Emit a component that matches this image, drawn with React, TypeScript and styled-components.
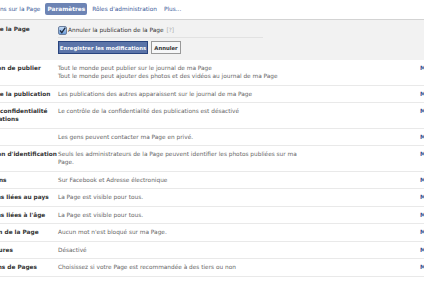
import React, { useState } from 'react';
import styled, { createGlobalStyle } from 'styled-components';

const GlobalStyle = createGlobalStyle`
  html, body {
    margin: 0;
    padding: 0;
    background: #fff;
    overflow: hidden;
  }
  body {
    font-family: "DejaVu Sans", "Lucida Grande", Tahoma, sans-serif;
    font-size: 5.8px;
    color: #333;
  }
`;

interface SettingRow {
  label: string[];
  value: string[];
}

// lines are given as they wrap in the narrow settings column
const rows: SettingRow[] = [
  {
    label: ['Autorisation de publier'],
    value: [
      'Tout le monde peut publier sur le journal de ma Page',
      'Tout le monde peut ajouter des photos et des vidéos au journal de ma Page',
    ],
  },
  { label: ['Visibilité de la publication'], value: ['Les publications des autres apparaissent sur le journal de ma Page'] },
  {
    label: ['Ciblage et confidentialité', 'des publications'],
    value: ['Le contrôle de la confidentialité des publications est désactivé'],
  },
  { label: ['Messages'], value: ['Les gens peuvent contacter ma Page en privé.'] },
  {
    label: ["Autorisation d'identification"],
    value: ['Seuls les administrateurs de la Page peuvent identifier les photos publiées sur ma', 'Page.'],
  },
  { label: ['Notifications'], value: ['Sur Facebook et Adresse électronique'] },
  { label: ['Restrictions liées au pays'], value: ['La Page est visible pour tous.'] },
  { label: ["Restrictions liées à l'âge"], value: ['La Page est visible pour tous.'] },
  { label: ['Modération de la Page'], value: ["Aucun mot n'est bloqué sur ma Page."] },
  { label: ['Filtre à injures'], value: ['Désactivé'] },
  { label: ['Suggestions de Pages'], value: ['Choisissez si votre Page est recommandée à des tiers ou non'] },
];

const tabs = ['Informations sur la Page', 'Paramètres', "Rôles d'administration", 'Plus...'];

function App() {
  const [unpublished, setUnpublished] = useState(true);
  const [active, setActive] = useState('Paramètres');

  return (
    <>
      <GlobalStyle />
      <Page>
        <TabBar>
          {tabs.map((t) => (
            <Tab key={t} active={active === t} onClick={() => setActive(t)}>
              {t}
            </Tab>
          ))}
        </TabBar>
        <EditPanel>
          <PanelLabel>Visibilité de la Page</PanelLabel>
          <PanelBody>
            <CheckLine>
              <Check checked={unpublished} onClick={() => setUnpublished((c) => !c)}>
                {unpublished && (
                  <svg width="7" height="7" viewBox="0 0 7 7">
                    <path d="M1 3.4 L2.8 5.6 L6.3 0.6" stroke="#1d2a3f" strokeWidth="1.3" fill="none" />
                  </svg>
                )}
              </Check>
              Annuler la publication de la Page <Help>[?]</Help>
            </CheckLine>
            <Buttons>
              <PrimaryButton>Enregistrer les modifications</PrimaryButton>
              <SecondaryButton>Annuler</SecondaryButton>
            </Buttons>
          </PanelBody>
        </EditPanel>
        {rows.map((r) => (
          <Row key={r.label.join(' ')}>
            <Label>
              {r.label.map((l) => (
                <div key={l}>{l}</div>
              ))}
            </Label>
            <Value>
              {r.value.map((v) => (
                <div key={v}>{v}</div>
              ))}
            </Value>
            <EditLink>Modifier</EditLink>
          </Row>
        ))}
      </Page>
    </>
  );
}

export default App;

const Page = styled.div`
  width: 505px;
  margin-left: -35px;
`;

const TabBar = styled.div`
  display: flex;
  align-items: center;
  gap: 3px;
  height: 20px;
  padding-left: 3px;
  padding-bottom: 1px;
  border-bottom: 1px solid #d3d3d3;
  box-sizing: border-box;
`;

const Tab = styled.a<{ active: boolean }>`
  padding: 3px 2px;
  border-radius: 2px;
  line-height: 6px;
  white-space: nowrap;
  color: ${(p) => (p.active ? '#fff' : '#3b5998')};
  background: ${(p) => (p.active ? '#6d84b4' : 'transparent')};
  font-weight: ${(p) => (p.active ? 'bold' : 'normal')};
  cursor: pointer;
`;

const EditPanel = styled.div`
  display: grid;
  grid-template-columns: 93px 1fr;
  background: #f2f2f2;
  padding: 4px 0 0;
  height: 40px;
  box-sizing: border-box;
`;

const PanelLabel = styled.div`
  font-weight: bold;
  color: #333;
  padding-top: 2px;
  white-space: nowrap;
`;

const PanelBody = styled.div`
  display: flex;
  flex-direction: column;
  gap: 3px;
`;

const CheckLine = styled.div`
  display: flex;
  align-items: center;
  gap: 1px;
  width: 205px;
  height: 12px;
  color: #333;
  border-bottom: 1px solid #e2e2e2;
  padding-bottom: 1px;
`;

const Check = styled.span<{ checked: boolean }>`
  display: inline-flex;
  align-items: center;
  justify-content: center;
  width: 7px;
  height: 7px;
  border: 1px solid #6c7f9e;
  border-radius: 2px;
  background: ${(p) => (p.checked ? 'linear-gradient(#c4dbf5, #6a9bd8)' : '#fff')};
  cursor: pointer;
`;

const Help = styled.span`
  color: #aaa;
  margin-left: 2px;
`;

const Buttons = styled.div`
  display: flex;
  gap: 3px;
`;

const PrimaryButton = styled.button`
  height: 13px;
  width: 90px;
  padding: 0;
  white-space: nowrap;
  border: 1px solid #29447e;
  background: #5b74a8;
  color: #fff;
  font: bold 5.3px "DejaVu Sans", sans-serif;
`;

const SecondaryButton = styled.button`
  height: 13px;
  width: 30px;
  padding: 0;
  white-space: nowrap;
  border: 1px solid #999;
  background: #f6f7f8;
  color: #333;
  font: bold 5.3px "DejaVu Sans", sans-serif;
`;

const Row = styled.div`
  display: grid;
  grid-template-columns: 93px 362px 1fr;
  padding: 4px 0 4.5px;
  border-bottom: 1px solid #e9e9e9;
  line-height: 8px;
`;

const Label = styled.div`
  font-weight: bold;
  color: #333;
  white-space: nowrap;
`;

const Value = styled.div`
  color: #666;
  white-space: nowrap;
`;

const EditLink = styled.a`
  color: #3b5998;
  font-weight: bold;
`;
